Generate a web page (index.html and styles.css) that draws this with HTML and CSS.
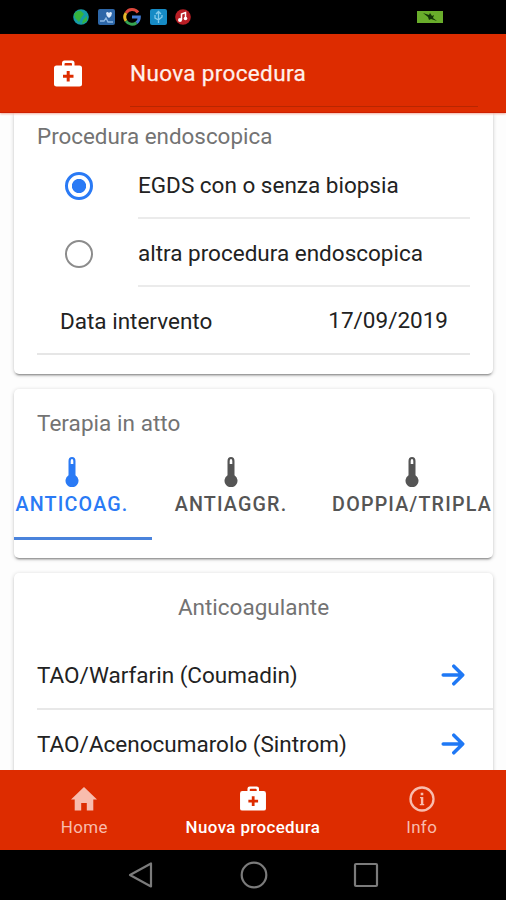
FILE: index.html
```html
<!DOCTYPE html>
<html lang="it">
<head>
<meta charset="utf-8">
<title>Nuova procedura</title>
<link rel="stylesheet" href="styles.css">
</head>
<body>
<svg class="defs" width="0" height="0" aria-hidden="true">
  <symbol id="medkit" viewBox="0 0 28 27">
    <path fill="currentColor" fill-rule="evenodd" d="M8 5.5V3Q8 .5 10.5.5H18Q20.500.5 20.500 3V5.500H25.500Q28 5.500 28 8V24.500Q28 26.500 25.500 26.500H2.500Q0 26.500 0 24.500V8Q0 5.500 2.500 5.500ZM10.500 5.500H18V4Q18 3 17 3H11.500Q10.500 3 10.500 4ZM12.700 11V14.800H9V17.800H12.700V21.500H15.700V17.800H19.500V14.800H15.700V11Z"/>
  </symbol>
  <symbol id="thermo" viewBox="0 0 14 30">
    <path fill="currentColor" fill-rule="evenodd" d="M3.500 4Q3.500 0 7 0T10.500 4V18.300A6.500 6.500 0 1 1 3.500 18.300ZM5.700 4V7H8.300V4Q8.300 2 7 2T5.700 4Z"/>
  </symbol>
  <symbol id="arrow" viewBox="0 0 24 24">
    <path fill="none" stroke="currentColor" stroke-width="3.500" stroke-linecap="round" stroke-linejoin="round" d="M2.200 12H21.500M12.800 3.200L21.700 12L12.800 20.800"/>
  </symbol>
</svg>
<div class="screen">
  <div class="status">
    <div class="notifs">
      <svg width="16" height="16" viewBox="0 0 16 16"><circle cx="8" cy="8" r="7.800" fill="#159ba8"/><path d="M1 5Q4 1 8 2L11 5L8 9L6 13L2 9ZM10 11L14 7L14 12L9 15Z" fill="#35b43d"/></svg>
      <svg width="17" height="16" viewBox="0 0 17 16"><rect width="17" height="16" rx="2" fill="#2d67a8"/><path d="M8 4Q9.500 2 11 4Q12.500 2 14 4Q14 7 11 9Q8 7 8 4" fill="#dceafa"/><path d="M2 12H6L8 9L10 13H15" fill="none" stroke="#8db9e4" stroke-width="1.300"/></svg>
      <svg width="18" height="18" viewBox="0 0 18 18" fill="none" stroke-width="3"><path d="M15 4.500A7.300 7.300 0 0 0 3 5" stroke="#dc483c"/><path d="M3 5A7.300 7.300 0 0 0 3 13" stroke="#e8b829"/><path d="M3 13A7.300 7.300 0 0 0 13.500 14.700" stroke="#35a451"/><path d="M13.500 14.700Q16.300 12.500 16.300 9H9" stroke="#427dd8"/></svg>
      <svg width="17" height="16" viewBox="0 0 17 16"><rect width="17" height="16" rx="2" fill="#168bc5"/><path d="M8.500 14V3M6 5L8.500 2.500L11 5M5 6V9L8.500 11L12 8V6" fill="none" stroke="#83caeb" stroke-width="1.300"/></svg>
      <svg width="16" height="16" viewBox="0 0 16 16"><circle cx="8" cy="8" r="7.800" fill="#b91e25"/><path d="M6.500 11V5L10.500 3.500V9" fill="none" stroke="#fff" stroke-width="1.500"/><circle cx="5" cy="11" r="2" fill="#fff"/><circle cx="10.500" cy="9.500" r="1.800" fill="#fff"/></svg>
    </div>
    <svg width="26" height="12" viewBox="0 0 26 12"><rect width="26" height="12" fill="#69ad2b"/><path d="M6 2L12 4L13 2L15 5L17 4L16 7L20 10L14 8L12 9L11 6Z" fill="#133307"/></svg>
  </div>
  <header class="header">
    <svg class="kit"><use href="#medkit"/></svg>
    <div class="title"><span class="t-title">Nuova procedura</span></div>
  </header>
  <main class="content">
    <section class="card procedure">
      <h2 class="label">Procedura endoscopica</h2>
      <div class="option"><i class="radio on"></i><div class="optext"><span>EGDS con o senza biopsia</span></div></div>
      <div class="option"><i class="radio"></i><div class="optext"><span>altra procedura endoscopica</span></div></div>
      <div class="date"><span>Data intervento</span><span class="t-date">17/09/2019</span></div>
    </section>
    <section class="card therapy">
      <h2 class="label">Terapia in atto</h2>
      <div class="segments">
        <div class="segment active"><svg class="thermo"><use href="#thermo"/></svg><span>ANTICOAG.</span></div>
        <div class="segment"><svg class="thermo"><use href="#thermo"/></svg><span>ANTIAGGR.</span></div>
        <div class="segment"><svg class="thermo"><use href="#thermo"/></svg><span>DOPPIA/TRIPLA</span></div>
      </div>
    </section>
    <section class="card drugs">
      <h2 class="label">Anticoagulante</h2>
      <div class="drug"><span>TAO/Warfarin (Coumadin)</span><svg class="arrow"><use href="#arrow"/></svg></div>
      <div class="drug"><span>TAO/Acenocumarolo (Sintrom)</span><svg class="arrow"><use href="#arrow"/></svg></div>
    </section>
  </main>
  <nav class="tabs">
    <div class="tab"><svg width="26" height="24" viewBox="0 0 26 24"><path fill="currentColor" d="M13 0L26 12.500H22.300V23.500H15.800V16H10.200V23.500H3.700V12.500H0Z"/></svg><span>Home</span></div>
    <div class="tab selected"><svg width="28" height="25"><use href="#medkit"/></svg><span>Nuova procedura</span></div>
    <div class="tab"><svg width="26" height="26" viewBox="0 0 26 26"><circle cx="13" cy="13" r="11.500" fill="none" stroke="currentColor" stroke-width="2.300"/><path fill="currentColor" d="M11.700 6.700H14.300V9.300H11.700ZM11 11H14.300V18H15.200V19.300H10.800V18H11.900V12.300H11Z"/></svg><span>Info</span></div>
  </nav>
  <div class="navbar">
    <svg width="26" height="28" viewBox="0 0 26 28"><path d="M23 2.500V25.500L2 14Z"/></svg>
    <svg width="28" height="28" viewBox="0 0 28 28"><circle cx="14" cy="14" r="12.300"/></svg>
    <svg width="26" height="26" viewBox="0 0 26 26"><rect x="2" y="2" width="22" height="22" rx="1"/></svg>
  </div>
</div>
</body>
</html>
```
FILE: styles.css
```css
* { box-sizing: border-box; }
body { margin: 0; font-family: Roboto, sans-serif; font-size: 22.500px; line-height: 26px; color: #222; background: #fdfdfd; }
.defs { display: block; height: 0; }
.screen { width: 506px; height: 900px; overflow: hidden; display: flex; flex-direction: column; }
span { white-space: nowrap; }

.status { height: 34px; flex: none; background: #000; display: flex; align-items: center; justify-content: space-between; padding: 0 63px 0 73px; }
.notifs { display: flex; align-items: center; gap: 8.500px; }

.header { height: 79px; flex: none; background: #dd2c00; color: #fff0ec; display: flex; align-items: flex-start; padding-left: 54px; border-bottom: 1px solid #cf1f00; box-shadow: 0 1px 2px #dd2c0060; position: relative; z-index: 1; }
.kit { width: 28px; height: 27px; margin-top: 26px; color: #fff; }
.title { width: 348px; height: 73px; margin-left: 48px; padding-top: 26px; border-bottom: 1px solid #b82600; letter-spacing: .35px; -webkit-text-stroke: .25px; }

.content { height: 657px; flex: none; overflow: hidden; padding: 0 13px 0 14px; display: flex; flex-direction: column; gap: 15px; background: #fdfdfd; }
.card { flex: none; background: #fff; border-radius: 5px; box-shadow: 0 3px 2px -2px #0005, 0 1px 4px #0003, 0 2px 2px #0001; overflow: hidden; padding-left: 23px; }
.label { margin: 0; font-size: 22.500px; font-weight: 400; color: #737373; }
.procedure { height: 261px; padding-top: 10px; padding-right: 23px; border-radius: 0 0 5px 5px; }
.procedure .label { font-size: 22.400px; }
.therapy .label { letter-spacing: .05px; }
.option { display: flex; height: 68px; padding-left: 28px; }
.option:first-of-type { height: 70px; }
.radio { width: 28px; height: 28px; border: 2.500px solid #8c8c8c; border-radius: 50%; margin-top: 21px; flex: none; }
.radio.on { margin-top: 23px; border-width: 3px; border-color: #2a7af5; background: radial-gradient(circle, #2a7af5 6.700px, transparent 7.500px); }
.optext { flex: 1; margin-left: 45px; padding-top: 21px; border-bottom: 2px solid #ebebeb; }
.option:first-of-type .optext { padding-top: 23px; }
.date { height: 68px; display: flex; justify-content: space-between; padding: 21px 22px 0 23px; border-bottom: 2px solid #e6e6e6; }
.t-date { margin-top: -1px; }

.therapy { height: 169px; padding-top: 21px; }
.segments { display: flex; height: 104px; margin-left: -23px; color: #555; }
.segment { flex: none; display: flex; flex-direction: column; align-items: center; padding-top: 21px; font-size: 19.700px; font-weight: 500; letter-spacing: 1.180px; line-height: 24px; height: 104px; }
.segment:nth-child(1) { width: 138px; padding-right: 22px; }
.segment:nth-child(2) { width: 158px; }
.segment:nth-child(3) { width: 204px; }
.segment.active { color: #2a7af5; border-bottom: 3px solid #4a83dc; }
.thermo { width: 14px; height: 30px; margin-bottom: 6px; }

.drugs { height: 230px; padding-top: 21px; }
.drugs .label { text-align: center; padding-right: 23px; }
.drug { height: 69px; display: flex; align-items: center; justify-content: space-between; padding-right: 28px; border-bottom: 2px solid #e8e8e8; }
.drugs .label + .drug { margin-top: 21px; height: 69px; }
.arrow { width: 24px; height: 24px; color: #1f78f5; }

.tabs { height: 80px; flex: none; background: #dd2c00; color: #f8bcad; display: grid; grid-template-columns: repeat(3, 1fr); font-size: 16.900px; line-height: 20px; letter-spacing: .400px; }
.tab { display: flex; flex-direction: column; align-items: center; justify-content: flex-end; padding-bottom: 13px; gap: 6px; }
.tab:nth-child(3) { gap: 5px; }
.selected { color: #fff; font-weight: 500; }
.navbar { height: 50px; flex: none; background: #000; display: flex; justify-content: space-between; align-items: center; padding: 0 127px 0 128px; }
.navbar svg { fill: none; stroke: #7b7b7b; stroke-width: 2.200; stroke-linejoin: round; }
```
